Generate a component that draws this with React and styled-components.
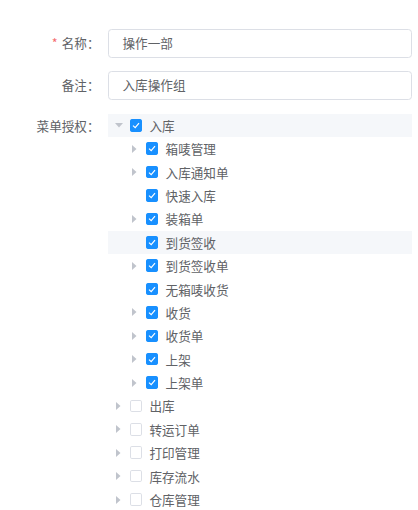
import React from "react";
import styled, { createGlobalStyle } from "styled-components";

const Global = createGlobalStyle`
  html, body { margin: 0; padding: 0; background: #fff; }
  body {
    font-family: "Noto Sans CJK SC", "Noto Sans", "Liberation Sans", sans-serif;
    color: #606266;
  }
`;

const Form = styled.div`
  padding-top: 29px;
  width: 412px;
`;

const FormItem = styled.div`
  display: flex;
  align-items: flex-start;
  margin-bottom: ${(p) => p.$mb ?? 13.5}px;
`;

const Label = styled.label`
  width: 108px;
  box-sizing: border-box;
  padding-right: 8.5px;
  flex: none;
  text-align: right;
  font-size: 12.6px;
  line-height: ${(p) => p.$lh}px;
  height: ${(p) => p.$lh}px;
  color: #606266;
  white-space: nowrap;
`;

const Star = styled.span`
  color: #f56c6c;
  margin-right: 4px;
`;

const Input = styled.div`
  flex: 1;
  box-sizing: border-box;
  height: 28.8px;
  border: 1px solid #dcdfe6;
  border-radius: 3.6px;
  padding: 0 13.5px;
  font-size: 12.6px;
  line-height: 26.8px;
  color: #606266;
`;

const Tree = styled.div`
  flex: 1;
  display: flex;
  flex-direction: column;
`;

const Node = styled.div`
  display: flex;
  align-items: center;
  height: 23.4px;
  padding-left: ${(p) => p.$level * 16.2}px;
  background: ${(p) => (p.$hl ? "#f5f7fa" : "transparent")};
`;

const Expand = styled.span`
  width: 21.6px;
  height: 23.4px;
  flex: none;
  display: flex;
  align-items: center;
  justify-content: center;
`;

const Box = styled.span`
  width: 12.6px;
  height: 12.6px;
  box-sizing: border-box;
  flex: none;
  border-radius: 1.8px;
  border: 1px solid ${(p) => (p.$checked ? "#1890ff" : "#dcdfe6")};
  background: ${(p) => (p.$checked ? "#1890ff" : "#fff")};
  margin-right: 7.2px;
  display: flex;
  align-items: center;
  justify-content: center;
`;

const NodeLabel = styled.span`
  font-size: 12.6px;
  color: #606266;
  white-space: nowrap;
`;

const Caret = ({ show, open }) => (
  <Expand>
    {show &&
      (open ? (
        <svg width="8" height="5" viewBox="0 0 8 5">
          <path d="M0 0 L8 0 L4 4.5 Z" fill="#c0c4cc" />
        </svg>
      ) : (
        <svg width="5" height="8" viewBox="0 0 5 8">
          <path d="M0 0 L4.5 4 L0 8 Z" fill="#c0c4cc" />
        </svg>
      ))}
  </Expand>
);

const Check = ({ checked }) => (
  <Box $checked={checked}>
    {checked && (
      <svg width="8" height="7" viewBox="0 0 8 7">
        <path d="M1 3.6 L3.2 5.6 L7 1.2" stroke="#fff" strokeWidth="1.2" fill="none" />
      </svg>
    )}
  </Box>
);

const nodes = [
  { t: "入库", l: 0, e: true, o: true, c: true, h: true },
  { t: "箱唛管理", l: 1, e: true, c: true },
  { t: "入库通知单", l: 1, e: true, c: true },
  { t: "快速入库", l: 1, e: false, c: true },
  { t: "装箱单", l: 1, e: true, c: true },
  { t: "到货签收", l: 1, e: false, c: true, h: true },
  { t: "到货签收单", l: 1, e: true, c: true },
  { t: "无箱唛收货", l: 1, e: false, c: true },
  { t: "收货", l: 1, e: true, c: true },
  { t: "收货单", l: 1, e: true, c: true },
  { t: "上架", l: 1, e: true, c: true },
  { t: "上架单", l: 1, e: true, c: true },
  { t: "出库", l: 0, e: true, c: false },
  { t: "转运订单", l: 0, e: true, c: false },
  { t: "打印管理", l: 0, e: true, c: false },
  { t: "库存流水", l: 0, e: true, c: false },
  { t: "仓库管理", l: 0, e: true, c: false },
];

export default function App() {
  return (
    <>
      <Global />
      <Form>
        <FormItem>
          <Label $lh={28.8}>
            <Star>*</Star>名称：
          </Label>
          <Input>操作一部</Input>
        </FormItem>
        <FormItem>
          <Label $lh={28.8}>备注：</Label>
          <Input>入库操作组</Input>
        </FormItem>
        <FormItem $mb={0}>
          <Label $lh={23.4}>菜单授权：</Label>
          <Tree>
            {nodes.map((n, i) => (
              <Node key={i} $level={n.l} $hl={n.h}>
                <Caret show={n.e} open={n.o} />
                <Check checked={n.c} />
                <NodeLabel>{n.t}</NodeLabel>
              </Node>
            ))}
          </Tree>
        </FormItem>
      </Form>
    </>
  );
}
